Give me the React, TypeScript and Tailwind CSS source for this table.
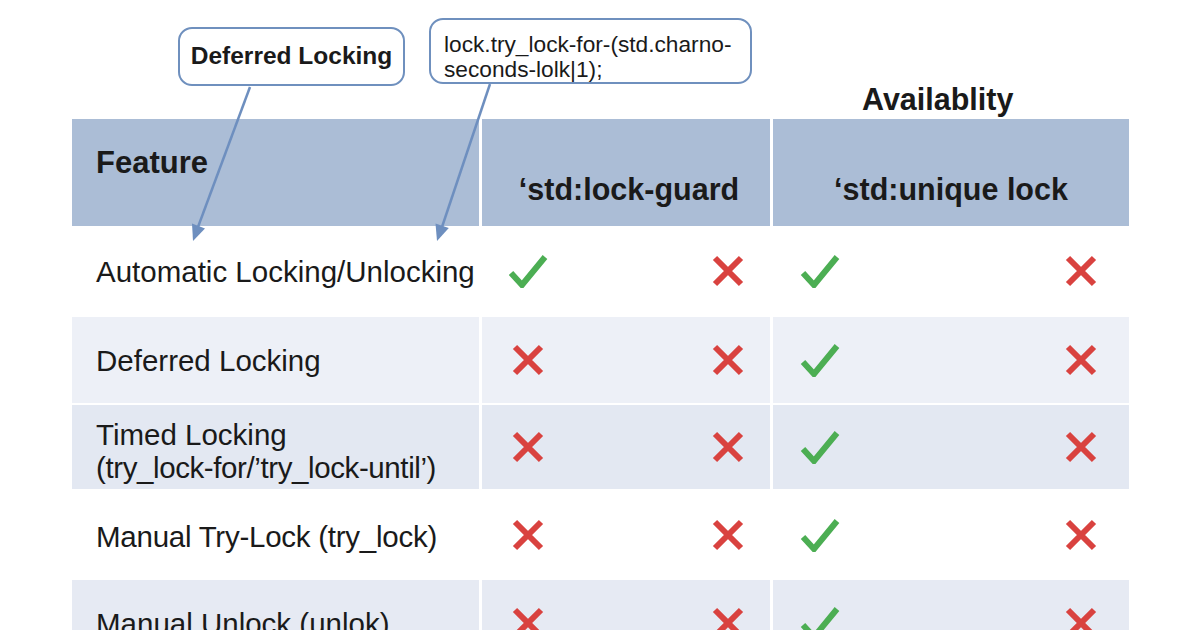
const rows = [
  { label: ["Automatic Locking/Unlocking"], bg: "bg-white", h: "h-[91px]", pad: "pt-[2px]", cells: ["check", "x", "check", "x"] },
  { label: ["Deferred Locking"], bg: "bg-[#edf0f7]", h: "h-[88px]", pad: "pt-0", cells: ["x", "x", "check", "x"] },
  { label: ["Timed Locking", "(try_lock-for/’try_lock-until’)"], bg: "bg-[#e3e8f2]", h: "h-[86px]", pad: "pt-[8px]", cells: ["x", "x", "check", "x"] },
  { label: ["Manual Try-Lock (try_lock)"], bg: "bg-white", h: "h-[89px]", pad: "pt-[4px]", cells: ["x", "x", "check", "x"] },
  { label: ["Manual Unlock (unlok)"], bg: "bg-[#e6eaf3]", h: "h-[88px]", pad: "pt-0", cells: ["x", "x", "check", "x"] },
];

function Check() {
  return (
    <svg width="40" height="34" viewBox="0 0 40 34" className="block">
      <path d="M3 19 L14 31 L37 3" fill="none" stroke="#4cae53" strokeWidth="6" strokeLinejoin="miter" />
    </svg>
  );
}

function Cross() {
  return (
    <svg width="34" height="34" viewBox="0 0 34 34" className="block">
      <path d="M4 4 L30 30 M30 4 L4 30" fill="none" stroke="#d9423f" strokeWidth="6" />
    </svg>
  );
}

function Mark({ kind }: { kind: string }) {
  return kind === "check" ? <Check /> : <Cross />;
}

export default function App() {
  return (
    <div className="relative w-[1200px] h-[630px] overflow-hidden bg-white font-['Liberation_Sans',Arial,sans-serif] text-[#1a1a1a]">
      {/* callouts + title */}
      <div className="flex items-start h-[119px]">
        <div className="ml-[178px] mt-[27px] w-[227px] h-[59px] rounded-[14px] border-[2.5px] border-[#6f90be] bg-white flex items-center justify-center">
          <span className="text-[24.5px] font-bold leading-none">Deferred Locking</span>
        </div>
        <div className="ml-[24px] mt-[18px] w-[323px] h-[66px] rounded-[14px] border-[2.5px] border-[#6f90be] bg-white pl-[13px] pt-[12px] text-[22.7px] leading-[25px]">
          <div>lock.try_lock-for-(std.charno-</div>
          <div>seconds-lolk|1);</div>
        </div>
        <div className="ml-[110px] mt-[81px] text-[30.5px] font-bold leading-[36px]">Availablity</div>
      </div>

      {/* table */}
      <div className="ml-[72px] w-[1057px] flex flex-col">
        <div className="grid grid-cols-[407px_288px_356px] gap-x-[3px] h-[107px]">
          <div className="bg-[#abbdd6] pl-6 pt-[26px] text-[31px] font-bold leading-[36px]">Feature</div>
          <div className="bg-[#abbdd6] pt-[52px] pl-[6px] text-center text-[30.5px] font-bold leading-[36px]">‘std:lock-guard</div>
          <div className="bg-[#abbdd6] pt-[52px] text-center text-[30.5px] font-bold leading-[36px]">‘std:unique lock</div>
        </div>
        {rows.map((r, i) => (
          <div key={i} className={`grid grid-cols-[407px_288px_356px] gap-x-[3px] border-b-2 border-white ${r.h}`}>
            <div className={`${r.bg} ${r.pad} pl-6 flex flex-col justify-center text-[29.5px] leading-[33px]`}>
              {r.label.map((l, j) => (
                <span key={l} className={j === 1 ? "tracking-[-0.4px]" : i === 3 ? "tracking-[-0.25px]" : ""}>
                  {l}
                </span>
              ))}
            </div>
            <div className={`${r.bg} flex items-center justify-between pl-[26px] pr-[25px]`}>
              <div className="w-[40px] flex justify-center"><Mark kind={r.cells[0]} /></div>
              <Mark kind={r.cells[1]} />
            </div>
            <div className={`${r.bg} flex items-center justify-between pl-[27px] pr-[31px]`}>
              <div className="w-[40px] flex justify-center"><Mark kind={r.cells[2]} /></div>
              <Mark kind={r.cells[3]} />
            </div>
          </div>
        ))}
      </div>

      {/* callout arrows */}
      <svg className="absolute inset-0 pointer-events-none" width="1200" height="630" viewBox="0 0 1200 630">
        <line x1="250" y1="87" x2="198" y2="227" stroke="#6e8fbf" strokeWidth="2.5" />
        <polygon points="193,241 205,228.4 192,223.5" fill="#6e8fbf" />
        <line x1="490" y1="84" x2="442" y2="227" stroke="#6e8fbf" strokeWidth="2.5" />
        <polygon points="437,241 448.8,228.1 435.5,223.6" fill="#6e8fbf" />
      </svg>
    </div>
  );
}
